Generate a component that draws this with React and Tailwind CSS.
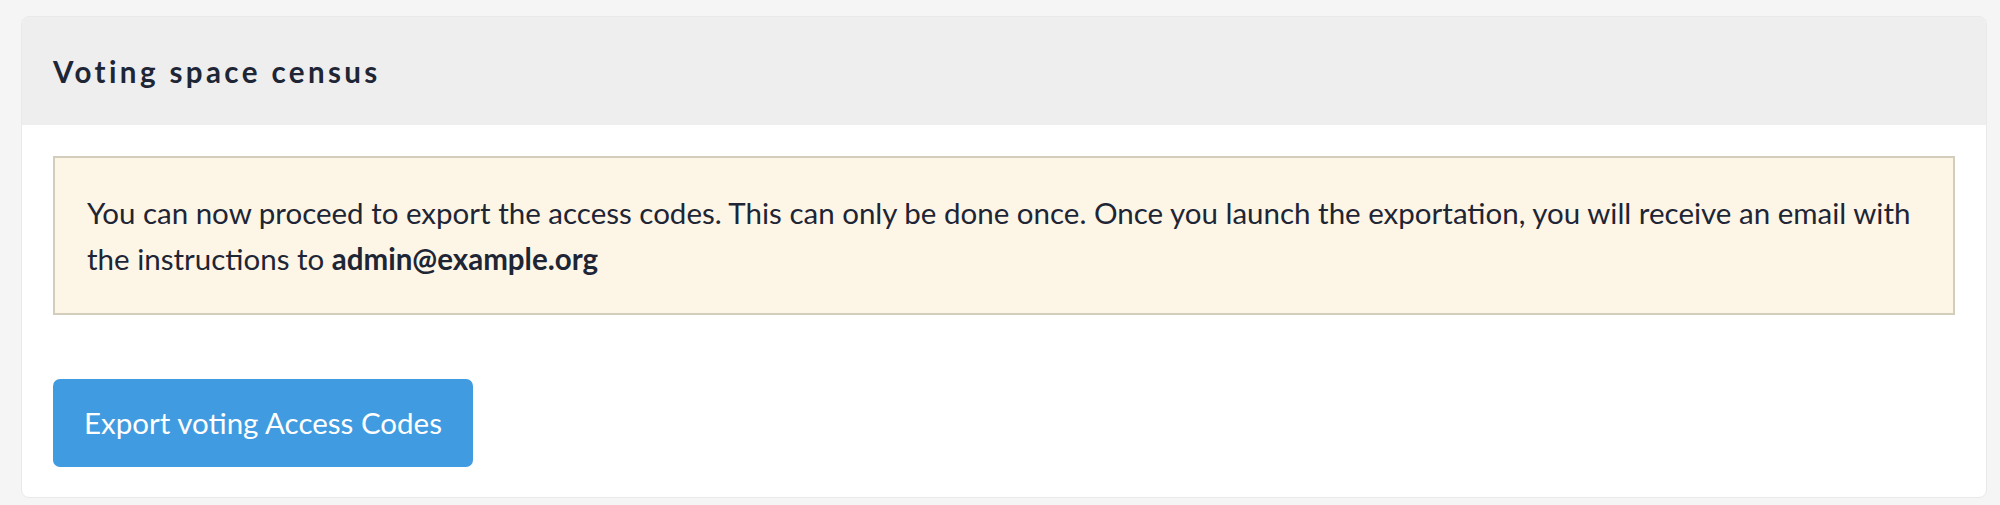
const VotingCensus = () => {
    return (
        <section className="min-h-[505px] bg-[#f5f5f5] pt-[16px] pl-[21px] font-['Lato',sans-serif] text-[#1e2535]">
            <div className="w-[1966px] rounded-[8px] bg-white border border-[#e9e9e9] overflow-hidden">
                <div className="h-[108px] flex items-center px-[31px] bg-[#eeeeee]">
                    <h2 className="text-[29.5px] font-bold tracking-[3.4px] pt-[2px]">
                        Voting space census
                    </h2>
                </div>

                <div className="px-[31px] pt-[31px] pb-[30px]">
                    <div className="border-2 border-[#d3cdbb] bg-[#fdf6e7] pl-[32px] pr-[24px] pt-[32px] pb-[31px] text-[29.5px] leading-[46px]">
                        You can now proceed to export the access codes. This can only be done once. Once you launch the exportation, you will receive an email with the instructions to <strong className="font-bold">admin@example.org</strong>
                    </div>

                    <button
                        type="button"
                        className="mt-[64px] w-[420px] h-[88px] flex items-center justify-center rounded-[7px] bg-[#409be0] text-white text-[29.5px]"
                    >
                        Export voting Access Codes
                    </button>
                </div>
            </div>
        </section>
    );
};

export default function App() {
    return <VotingCensus />;
}
